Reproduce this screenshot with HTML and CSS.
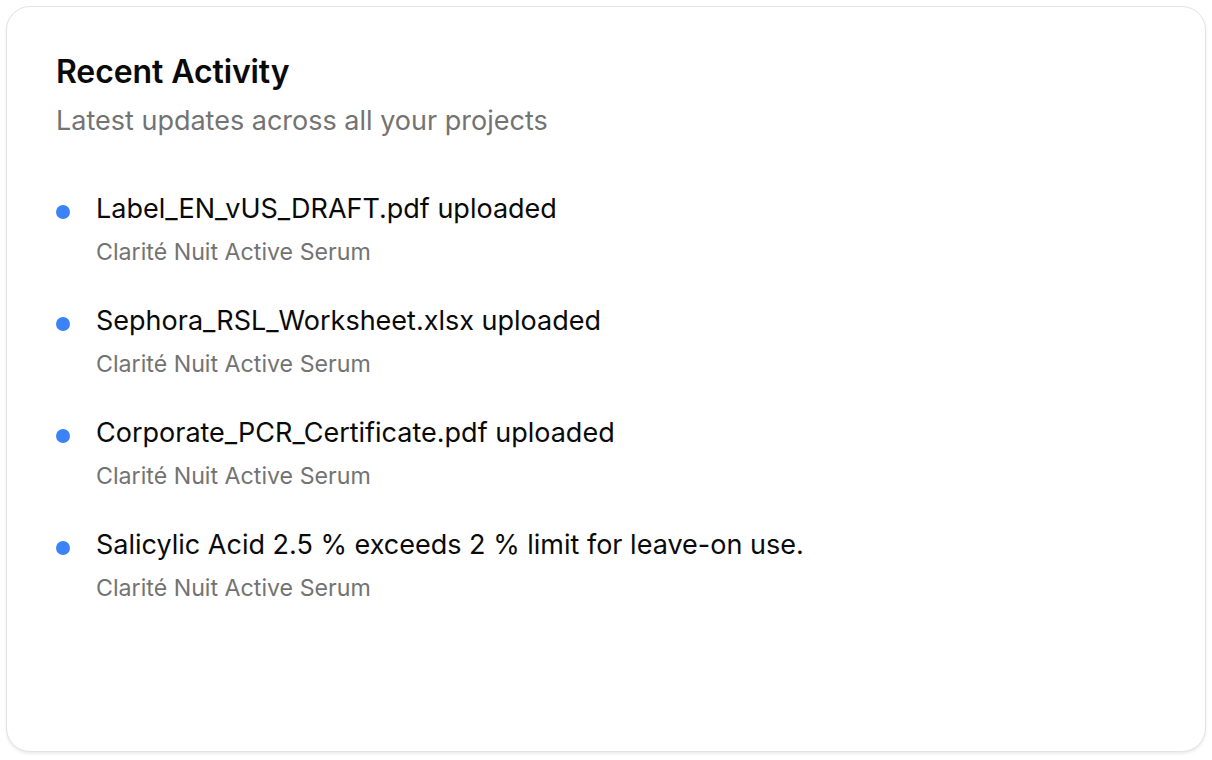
FILE: index.html
```html
<!DOCTYPE html>
<html>
<head>
<meta charset="utf-8">
<link rel="stylesheet" href="styles.css">
</head>
<body>
<div class="card">
  <h2 class="title">Recent Activity</h2>
  <p class="subtitle">Latest updates across all your projects</p>
  <ul class="list">
    <li class="item">
      <span class="dot"></span>
      <div class="text">
        <div class="main">Label_EN_vUS_DRAFT.pdf uploaded</div>
        <div class="sub">Clarité Nuit Active Serum</div>
      </div>
    </li>
    <li class="item">
      <span class="dot"></span>
      <div class="text">
        <div class="main">Sephora_RSL_Worksheet.xlsx uploaded</div>
        <div class="sub">Clarité Nuit Active Serum</div>
      </div>
    </li>
    <li class="item">
      <span class="dot"></span>
      <div class="text">
        <div class="main">Corporate_PCR_Certificate.pdf uploaded</div>
        <div class="sub">Clarité Nuit Active Serum</div>
      </div>
    </li>
    <li class="item">
      <span class="dot"></span>
      <div class="text">
        <div class="main">Salicylic Acid 2.5 % exceeds 2 % limit for leave-on use.</div>
        <div class="sub">Clarité Nuit Active Serum</div>
      </div>
    </li>
  </ul>
</div>
</body>
</html>
```

FILE: styles.css
```css
html, body {
  margin: 0;
  padding: 0;
  background: #ffffff;
}
body {
  padding: 6px;
  font-family: Inter, "Noto Sans", sans-serif;
  color: #0a0a0a;
}
.card {
  box-sizing: border-box;
  width: 1200px;
  height: 746px;
  border: 1.5px solid #e3e3e3;
  border-radius: 24px;
  box-shadow: 0 2px 3px rgba(0,0,0,0.08);
  padding: 44px 49px;
  background: #fff;
}
.title {
  margin: 0;
  font-size: 32px;
  font-weight: 600;
  line-height: 42px;
  letter-spacing: -0.1px;
}
.subtitle {
  margin: 10px 0 0;
  font-size: 27px;
  line-height: 36px;
  color: #737373;
}
.list {
  list-style: none;
  margin: 53px 0 0;
  padding: 0;
  display: flex;
  flex-direction: column;
  gap: 38px;
}
.item {
  display: flex;
  align-items: flex-start;
  gap: 26px;
}
.dot {
  flex: none;
  width: 14px;
  height: 14px;
  border-radius: 50%;
  background: #3b82f6;
  margin-top: 13px;
}
.main {
  font-size: 27px;
  line-height: 34px;
}
.sub {
  margin-top: 12px;
  font-size: 23.2px;
  line-height: 28px;
  color: #737373;
}
```
